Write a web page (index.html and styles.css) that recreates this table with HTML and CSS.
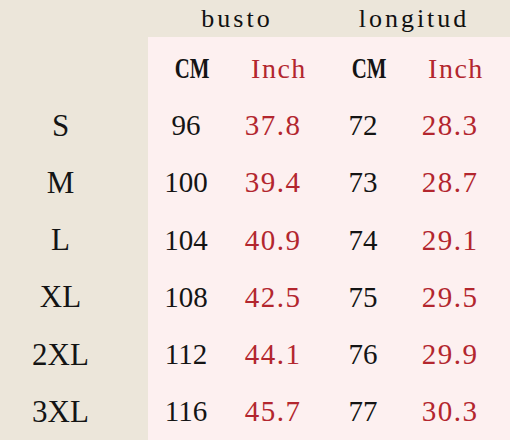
FILE: index.html
```html
<!DOCTYPE html>
<html lang="es">
<head>
<meta charset="utf-8">
<title>Tabla de tallas</title>
<link rel="stylesheet" href="styles.css">
</head>
<body>
<div class="sheet">
  <div class="corner"></div>
  <div class="titles">
    <div class="title busto">busto</div>
    <div class="title longitud">longitud</div>
  </div>
  <div class="sizes">
    <div class="size"></div>
    <div class="size">S</div>
    <div class="size">M</div>
    <div class="size">L</div>
    <div class="size">XL</div>
    <div class="size">2XL</div>
    <div class="size">3XL</div>
  </div>
  <div class="panel">
    <div class="head cm"><span class="narrow">CM</span></div>
    <div class="head inch">Inch</div>
    <div class="head cm"><span class="narrow">CM</span></div>
    <div class="head inch">Inch</div>

    <div class="val cm">96</div><div class="val inch">37.8</div><div class="val cm">72</div><div class="val inch">28.3</div>
    <div class="val cm">100</div><div class="val inch">39.4</div><div class="val cm">73</div><div class="val inch">28.7</div>
    <div class="val cm">104</div><div class="val inch">40.9</div><div class="val cm">74</div><div class="val inch">29.1</div>
    <div class="val cm">108</div><div class="val inch">42.5</div><div class="val cm">75</div><div class="val inch">29.5</div>
    <div class="val cm">112</div><div class="val inch">44.1</div><div class="val cm">76</div><div class="val inch">29.9</div>
    <div class="val cm">116</div><div class="val inch">45.7</div><div class="val cm">77</div><div class="val inch">30.3</div>
  </div>
</div>
</body>
</html>
```

FILE: styles.css
```css
html, body {
  margin: 0;
  padding: 0;
}

body {
  width: 510px;
  height: 440px;
  overflow: hidden;
  background: #ece6da;
  font-family: "Liberation Serif", "Times New Roman", serif;
  color: #141414;
}

.sheet {
  display: grid;
  grid-template-columns: 148px 1fr;
  grid-template-rows: 37px 1fr;
  width: 510px;
  height: 440px;
}

.titles {
  display: grid;
  grid-template-columns: 174px 174px;
  align-items: center;
}

.title {
  font-size: 26px;
  line-height: 37px;
  letter-spacing: 3px;
  text-align: center;
  color: #111;
}

.busto {
  padding-left: 4px;
}

.longitud {
  padding-left: 10px;
}

.sizes {
  display: grid;
  grid-template-rows: repeat(7, 57.2px);
  padding-top: 3px;
}

.size {
  display: flex;
  align-items: center;
  justify-content: center;
  padding-right: 27px;
  font-size: 31px;
}

.panel {
  background: #fdf0f0;
  display: grid;
  grid-template-columns: 76px 98px 82px 92px;
  grid-template-rows: repeat(7, 57.2px);
  padding-top: 3px;
}

.head, .val {
  display: flex;
  align-items: center;
  justify-content: center;
  font-size: 29px;
}

.head {
  padding-left: 12px;
}

.head.cm {
  font-weight: bold;
}

.narrow {
  display: inline-block;
  transform: scaleX(0.72);
}

.head.inch {
  font-size: 28px;
  letter-spacing: 1.5px;
}

.inch {
  color: #b3262e;
}

.val.inch {
  letter-spacing: 1.5px;
}
```
